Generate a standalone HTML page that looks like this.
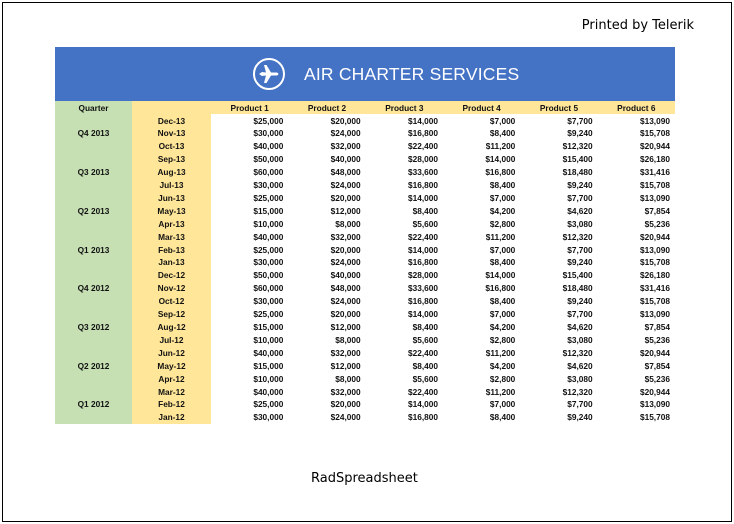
<!DOCTYPE html>
<html><head><style>
body{margin:0;width:734px;height:524px;background:#fff;position:relative;overflow:hidden;font-family:"Liberation Sans",sans-serif}
.frame{position:absolute;left:2px;top:2px;width:728px;height:518px;border:1px solid #000}
.t{position:absolute;font-family:"DejaVu Sans",sans-serif;font-size:13px;color:#000}
.banner{position:absolute;left:55px;top:47px;width:620px;height:54px;background:#4472c4}
.title{position:absolute;left:304px;top:64px;color:#fff;font-size:17.5px;letter-spacing:0.2px}
.grid{position:absolute;left:55px;top:101px;width:620px;display:grid;grid-template-columns:77px 79px repeat(6,77.33px);grid-template-rows:13px repeat(24,12.917px);font-size:8.3px;font-weight:bold;color:#111}
.grid div{line-height:11.4px;padding-top:1.5px;white-space:nowrap;overflow:hidden}
.q{background:#c6e0b4;text-align:center}
.h{background:#ffe699;text-align:center}
.m{background:#ffe699;text-align:center}
.v{text-align:right;padding-right:5px}
</style></head><body>
<div class="frame"></div>
<div class="t" style="right:40px;top:18px">Printed by Telerik</div>
<div class="t" style="left:311px;top:471px">RadSpreadsheet</div>
<div class="banner"></div>
<svg style="position:absolute;left:252px;top:57px" width="34" height="34" viewBox="0 0 34 34"><circle cx="17" cy="17" r="15" fill="none" stroke="#fff" stroke-width="2"/><path d="M7 17 L10 15 L14 15.5 L12 8 L14.5 8 L19 15.5 L25 15.5 Q28 17 25 18.5 L19 18.5 L14.5 26 L12 26 L14 18.5 L10 19 Z" fill="#fff"/></svg>
<div class="title">AIR CHARTER SERVICES</div>
<div class="grid" id="g">
<div class="q">Quarter</div><div class="h"></div><div class="h">Product 1</div><div class="h">Product 2</div><div class="h">Product 3</div><div class="h">Product 4</div><div class="h">Product 5</div><div class="h">Product 6</div>
</div>
<script>
var P={A:["$25,000","$20,000","$14,000","$7,000","$7,700","$13,090"],B:["$30,000","$24,000","$16,800","$8,400","$9,240","$15,708"],C:["$40,000","$32,000","$22,400","$11,200","$12,320","$20,944"],D:["$50,000","$40,000","$28,000","$14,000","$15,400","$26,180"],E:["$60,000","$48,000","$33,600","$16,800","$18,480","$31,416"],F:["$15,000","$12,000","$8,400","$4,200","$4,620","$7,854"],G:["$10,000","$8,000","$5,600","$2,800","$3,080","$5,236"]};
var rows=[["Dec-13","A"],["Nov-13","B"],["Oct-13","C"],["Sep-13","D"],["Aug-13","E"],["Jul-13","B"],["Jun-13","A"],["May-13","F"],["Apr-13","G"],["Mar-13","C"],["Feb-13","A"],["Jan-13","B"],["Dec-12","D"],["Nov-12","E"],["Oct-12","B"],["Sep-12","A"],["Aug-12","F"],["Jul-12","G"],["Jun-12","C"],["May-12","F"],["Apr-12","G"],["Mar-12","C"],["Feb-12","A"],["Jan-12","B"]];
var qs=["Q4 2013","Q3 2013","Q2 2013","Q1 2013","Q4 2012","Q3 2012","Q2 2012","Q1 2012"];
var h="";rows.forEach(function(r,i){h+='<div class="q">'+(i%3==1?qs[(i-1)/3]:"")+'</div><div class="m">'+r[0]+'</div>';P[r[1]].forEach(function(v){h+='<div class="v">'+v+'</div>'});});
document.getElementById("g").insertAdjacentHTML("beforeend",h);
</script>
</body></html>
